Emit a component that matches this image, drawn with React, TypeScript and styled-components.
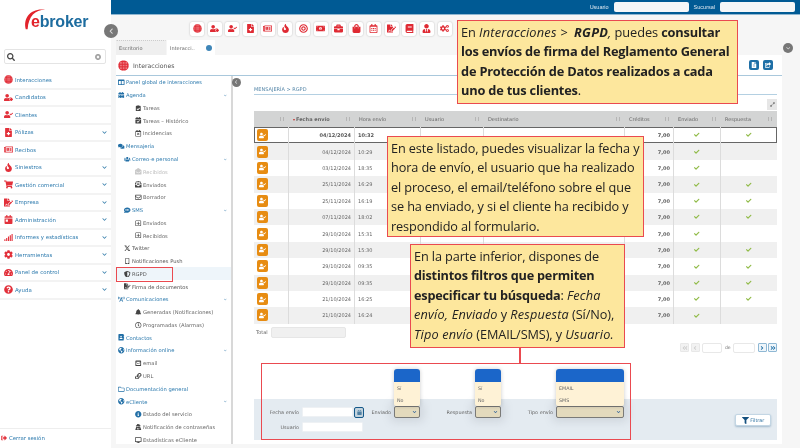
import React from "react";
import styled, { createGlobalStyle } from "styled-components";
import {
  FaUserCheck, FaUserTag, FaFileMedical, FaRegNewspaper, FaFire, FaShoppingCart, FaFileSignature, FaCalendarDay,
  FaSignal, FaCog, FaTachometerAlt, FaQuestionCircle, FaSignOutAlt, FaSearch, FaTimesCircle, FaChevronDown, FaChevronLeft,
  FaColumns, FaCalendarAlt, FaClipboardCheck, FaCalendarCheck, FaRegCalendarTimes, FaComments, FaUsers, FaEnvelopeOpen,
  FaEnvelopeOpenText, FaRegEnvelope, FaSms, FaRegPlusSquare, FaMobileAlt, FaShieldAlt, FaBroadcastTower, FaBell, FaRegClock,
  FaAddressBook, FaGlobeAmericas, FaEnvelopeSquare, FaLink, FaRegFolder, FaInfoCircle, FaUserSecret, FaDesktop, FaCheck,
  FaExpandAlt, FaFilter, FaMoneyBillAlt, FaBriefcase, FaShoppingBag, FaBook, FaUserTie, FaCogs, FaBullseye, FaRegCalendarAlt,
  FaAngleLeft, FaAngleRight, FaAngleDoubleLeft, FaAngleDoubleRight, FaCalendar, FaFileAlt, FaShareSquare,
} from "react-icons/fa";
import { FaXTwitter } from "react-icons/fa6";

const Global = createGlobalStyle`
  html, body { margin: 0; padding: 0; width: 800px; height: 448px; overflow: hidden; background: #f6f6f6; }
  * { box-sizing: border-box; }
`;

const Shell = styled.div`
  position: relative; width: 800px; height: 448px; overflow: hidden; display: flex; background: #f6f6f6;
  font-family: "DejaVu Sans", sans-serif; filter: blur(0.35px);
`;

/* sidebar */
const Sidebar = styled.aside`width: 111px; height: 448px; background: #fff; display: flex; flex-direction: column;`;
const LogoBox = styled.div`position: relative; height: 49px; padding: 13px 0 0 31px;`;
const LogoText = styled.div`font: bold 16px/18px "Liberation Sans", sans-serif; color: #1d6c9f; letter-spacing: -0.2px; span { color: #e2232b; }`;
const Swoosh = styled.svg`position: absolute; left: 23px; top: 7px;`;
const SearchBox = styled.div`
  margin: 0 5px 0 4px; height: 15px; border: 1px solid #e4e4e4; border-radius: 2px; display: flex; align-items: center;
  justify-content: space-between; padding: 0 4px 0 2px; color: #444; background: #fff;
`;
const Menu = styled.nav`margin-top: 8px; display: flex; flex-direction: column;`;
const MenuRow = styled.div`
  height: 17.5px; display: flex; align-items: center; padding: 0 3.5px 0 4px; border-bottom: 2px solid #f3f3f3;
  color: #2b79ad; font-size: 5.4px; letter-spacing: 0.05px; svg.ic { color: #e2303a; width: 9px; height: 9px; flex: none; }
`;
const MenuLabel = styled.span`margin-left: 2px; flex: 1; white-space: nowrap;`;
const Chevron = styled(FaChevronDown)`color: #3a80ad; width: 7px; height: 5px; flex: none;`;
const Logout = styled.div`
  margin-top: auto; height: 20px; border-top: 1px solid #eee; display: flex; align-items: center; padding: 0 0 2px 1px;
  color: #2b79ad; font-size: 5.4px; gap: 2px; svg { color: #e2303a; width: 6px; height: 6px; }
`;

/* main column */
const Main = styled.main`flex: 1; min-width: 0; display: flex; flex-direction: column;`;
const TopBar = styled.header`
  height: 15px; background: #005a94; border-bottom: 1px solid #8fb6d0; display: flex; align-items: center; justify-content: flex-end;
  padding: 0 5px 1px 0; color: #dfe9f1; font: 5.5px "Liberation Sans", sans-serif;
`;
const TopInput = styled.div`width: 75px; height: 10px; background: #f5f7f8; border-radius: 2px; margin: 0 5px 0 5px; &:last-child { margin-right: 0; }`;
const Toolbar = styled.div`height: 24px; display: flex; align-items: center; gap: 3.7px; padding: 3px 0 0 79px;`;
const ToolBtn = styled.div`
  width: 14px; height: 14px; flex: none; background: #fff; border-radius: 2px; box-shadow: 0 0 2px rgba(0,0,0,.25);
  display: flex; align-items: center; justify-content: center; color: #df2a33; svg { width: 9px; height: 9px; }
`;
const Tabs = styled.div`height: 16px; display: flex; padding-left: 5px; gap: 1px; align-items: flex-end;`;
const Tab = styled.div<{ $active?: boolean }>`
  height: 15px; width: ${p => p.$active ? 48 : 50}px; padding: 0 3px; display: flex; align-items: center; justify-content: space-between;
  font-size: 5px; color: #666; background: ${p => p.$active ? "#fff" : "#efefef"};
  border-top: 1px ${p => p.$active ? "solid #fff" : "dotted #ccc"}; border-radius: 1px 1px 0 0;
`;
const TabDot = styled.span`width: 6px; height: 6px; border-radius: 50%; background: #3f86b8; flex: none;`;
const Panel = styled.section`flex: 1; margin: 0 18px 4px 5px; background: #fff; display: flex; flex-direction: column; min-height: 0;`;
const PanelHead = styled.div`
  height: 21px; flex: none; border-bottom: 1px solid #a9c8dc; display: flex; align-items: center; padding: 0 9px 0 2px;
  color: #555; font-size: 6.2px; gap: 4px;
`;
const HeadBtns = styled.div`margin-left: auto; display: flex; gap: 4px;`;
const HeadBtn = styled.div`
  width: 10px; height: 10px; border-radius: 2px; background: #1f6fa6; color: #fff; display: flex; align-items: center; justify-content: center;
  svg { width: 6px; height: 6px; }
`;
const PanelBody = styled.div`flex: 1; display: flex; min-height: 0;`;
const Tree = styled.div`width: 117px; flex: none; border-right: 2px solid #d8d8d8; overflow: hidden;`;
const TreeRow = styled.div<{ $level: number; $dim?: boolean; $on?: boolean }>`
  height: 12.78px; display: flex; align-items: center; position: relative; white-space: nowrap;
  padding-left: ${p => [2, 8, 19][p.$level]}px; gap: 1.5px;
  font-size: 5.2px;
  background: ${p => p.$on ? "#eef5fa" : "transparent"};
  color: ${p => p.$dim ? "#bbb" : p.$level === 0 ? "#2b79ad" : p.$level === 1 ? "#555" : "#666"};
  svg.ti { width: 6.5px; height: 6.5px; flex: none; color: ${p => p.$dim ? "#c9c9c9" : p.$level === 0 ? "#226fa6" : "#444"}; }
  svg.blue { color: #226fa6; }
`;
const TreeLabel = styled.span<{ $blue?: boolean }>`color: ${p => p.$blue ? "#2b79ad" : "inherit"};`;
const TreeChevron = styled(FaChevronDown)`position: absolute; right: 4px; top: 5px; width: 4.5px; height: 3px; color: #5a93ba;`;

const Content = styled.div`flex: 1; min-width: 0; display: flex; flex-direction: column; padding: 9px 5px 4px 21px;`;
const Crumb = styled.div`height: 10px; border-bottom: 1px solid #b4d0e2; color: #5586a8; font-size: 5px; line-height: 8px; flex: none;`;
const ExpandRow = styled.div`height: 6px; margin-top: 5px; flex: none; position: relative;`;
const ExpandTab = styled.div`
  position: absolute; right: 0; top: -1px; width: 10px; height: 11px; background: #e6e6e6; color: #666; display: flex; align-items: center; justify-content: center;
  svg { width: 5px; height: 5px; }
`;
const COLS = "35px 66px 66px 63px 141px 49px 47px 56px";
const Table = styled.div`margin-top: 5px; flex: none; border-radius: 0 0 2px 2px;`;
const HeadRow = styled.div`
  display: grid; grid-template-columns: ${COLS}; height: 16px; background: #d3d4d4; color: #666; font-size: 5px; align-items: center;
`;
const HeadCell = styled.div`
  display: flex; align-items: center; height: 100%; padding-left: 4px; position: relative; white-space: nowrap;
  &::after { content: ""; position: absolute; right: 5px; top: 6px; width: 2px; height: 4px; border-left: 1px solid #b5b5b5; border-right: 1px solid #b5b5b5; }
`;
const SortMark = styled.span`color: #c6332f; margin-right: 1px; font-size: 4px;`;
const Row = styled.div<{ $alt: boolean; $sel?: boolean }>`
  display: grid; grid-template-columns: ${COLS}; height: 16.4px; position: relative;
  background: ${p => p.$alt ? "#f0f0f0" : "#fff"}; color: #666; font-size: 5px;
  ${p => p.$sel ? "box-shadow: inset 0 0 0 1px #666; font-weight: 700; color: #555;" : ""}
`;
const Cell = styled.div<{ $align?: string; $line?: boolean }>`
  display: flex; align-items: center; height: 100%;
  justify-content: ${p => p.$align || "flex-start"};
  border-right: ${p => p.$line ? "1.5px solid #dcdcdc" : "0"};
  padding: ${p => p.$align === "flex-end" ? "0 3px 0 0" : p.$align === "flex-start" ? "0 0 0 3px" : p.$align ? "0" : "0 0 0 3px"};
`;
const OrangeBtn = styled.div`
  width: 11px; height: 12px; border-radius: 2px; background: #e78c12; color: #fff; display: flex; align-items: center; justify-content: center;
  svg { width: 7px; height: 7px; }
`;
const Tick = styled(FaCheck)`width: 5.5px; height: 5.5px; color: #8fba45;`;
const TotalRow = styled.div`display: flex; align-items: center; gap: 3px; margin-top: 3px; height: 11px; color: #666; font-size: 5px; padding-left: 2px; flex: none;`;
const TotalBox = styled.div`width: 75px; height: 11px; background: #f0f0f0; border: 1px solid #e6e6e6; border-radius: 2px;`;
const Pager = styled.div`display: flex; align-items: center; justify-content: flex-end; margin-top: 5px; height: 10px; gap: 1.5px; color: #777; font-size: 4.5px; flex: none;`;
const PageBtn = styled.div<{ $on?: boolean }>`
  width: 9px; height: 9px; display: flex; align-items: center; justify-content: center; border-radius: 1px;
  border: 1px solid ${p => p.$on ? "#8fb8d4" : "#e8e8e8"}; background: ${p => p.$on ? "#eef5fa" : "#f2f2f2"};
  color: ${p => p.$on ? "#1f6fa6" : "#ccc"}; svg { width: 6px; height: 6px; }
`;
const PageInput = styled.div<{ $w: number }>`width: ${p => p.$w}px; height: 10px; border: 1px solid #e8e8e8; border-radius: 2px; background: #fff; margin: 0 1px;`;

const Filters = styled.div`margin-top: auto; height: 41px; flex: none; background: #e4ebf1; display: flex; padding-top: 8px;`;
const FilterRows = styled.div`flex: 1; display: flex; flex-direction: column; gap: 5px;`;
const FilterRow = styled.div`display: flex; align-items: center; height: 10px;`;
const Field = styled.div<{ $ml: number }>`display: flex; align-items: center; margin-left: ${p => p.$ml}px; position: relative;`;
const FieldLabel = styled.label<{ $w: number }>`width: ${p => p.$w}px; text-align: right; margin-right: 3px; font-size: 4.9px; color: #666; white-space: nowrap; display: flex; justify-content: flex-end;`;
const TextInput = styled.div<{ $w: number }>`width: ${p => p.$w}px; height: 10px; background: #fff; border-radius: 1px; border: 1px solid #eef1f4;`;
const DateBtn = styled.div`
  width: 10px; height: 11px; margin-left: 1px; border-radius: 2px; background: #c3d3dd; border: 1.5px solid #15598a; color: #4f80a3; display: flex; align-items: center; justify-content: center;
  svg { width: 5px; height: 5px; }
`;
const SelectBox = styled.div<{ $w: number }>`
  width: ${p => p.$w}px; height: 12px; background: #e3dabd; border: 1px solid #7a7a78; border-radius: 2px; display: flex; align-items: center; justify-content: flex-end;
  padding-right: 2px; box-shadow: 0 0 9px 4px rgba(120,130,140,.18); svg { width: 5px; height: 4px; color: #2a5f9a; }
`;
const DropList = styled.div<{ $w: number }>`
  position: absolute; right: 0; bottom: 12px; width: ${p => p.$w}px; background: #fef2d6; border-radius: 3px 3px 2px 2px; overflow: hidden; box-shadow: 0 0 4px rgba(0,0,0,.2);
`;
const DropHead = styled.div`height: 13px; background: #1b66c9;`;
const DropItem = styled.div`height: 12px; display: flex; align-items: center; padding-left: 3px; font-size: 4.8px; color: #666;`;
const FilterBtn = styled.div`
  width: 36px; height: 12px; margin: 7px 6px 0 0; background: #fff; border: 1px solid #c3d6e4; border-radius: 2px; box-shadow: 0 1px 2px rgba(60,110,150,.4);
  display: flex; align-items: center; justify-content: center; gap: 1.5px; color: #2b6f9f; font-size: 4.8px; svg { width: 7px; height: 7px; color: #14507f; }
`;

/* overlays */
const CircleBtn = styled.div<{ $x: number; $y: number; $s: number }>`
  position: absolute; left: ${p => p.$x}px; top: ${p => p.$y}px; width: ${p => p.$s}px; height: ${p => p.$s}px; border-radius: 50%;
  background: #777; color: #ddd; display: flex; align-items: center; justify-content: center; z-index: 2;
  svg { width: 45%; height: 45%; }
`;
const Callout = styled.div<{ $x: number; $y: number; $w: number; $h: number; $fs: number }>`
  position: absolute; left: ${p => p.$x}px; top: ${p => p.$y}px; width: ${p => p.$w}px; height: ${p => p.$h}px; z-index: 3;
  background: #fde79d; border: 1.5px solid #ea4a50; color: #222;
  font-family: "Open Sans", sans-serif; font-size: ${p => p.$fs}px; padding: 1.5px 3px 0 3px; white-space: nowrap;
  letter-spacing: -0.1px; line-height: 19.5px;
  b { letter-spacing: -0.2px; }
  i { letter-spacing: 0.2px; }
`;
const Mark = styled.div<{ $x: number; $y: number; $w: number; $h: number }>`
  position: absolute; left: ${p => p.$x}px; top: ${p => p.$y}px; width: ${p => p.$w}px; height: ${p => p.$h}px; z-index: 3;
  border: 1.5px solid #ea4a50; pointer-events: none;
`;
const Connector = styled.div`position: absolute; left: 519px; top: 348px; width: 1.5px; height: 16px; background: #ea4a50; z-index: 3;`;

function DotGlobe({ s = 9 }: { s?: number }) {
  const dots: React.ReactNode[] = [];
  for (let y = 1; y < 16; y += 2.3) for (let x = 1; x < 16; x += 2.3) {
    dots.push(<circle key={x + "-" + y} cx={x} cy={y} r="0.55" fill="#fff" />);
  }
  return (
    <svg className="ic" width={s} height={s} viewBox="0 0 16 16">
      <circle cx="8" cy="8" r="7.8" fill="#e2303a" />
      {dots}
    </svg>
  );
}

const I = (C: any) => <C className="ic" />;

const menu: [React.ReactNode, string, boolean][] = [
  [<DotGlobe />, "Interacciones", false],
  [I(FaUserTag), "Candidatos", false],
  [I(FaUserCheck), "Clientes", false],
  [I(FaFileMedical), "Pólizas", true],
  [I(FaRegNewspaper), "Recibos", false],
  [I(FaFire), "Siniestros", true],
  [I(FaShoppingCart), "Gestión comercial", true],
  [I(FaFileSignature), "Empresa", true],
  [I(FaCalendarDay), "Administración", true],
  [I(FaSignal), "Informes y estadísticas", true],
  [I(FaCog), "Herramientas", true],
  [I(FaTachometerAlt), "Panel de control", true],
  [I(FaQuestionCircle), "Ayuda", true],
];

const tools = [null, FaUserTag, FaUserCheck, FaFileMedical, FaRegNewspaper, FaFire, FaBullseye, FaMoneyBillAlt, FaBriefcase, FaShoppingBag, FaRegCalendarAlt, FaFileSignature, FaBook, FaUserTie, FaCogs];

type T = { l: number; t: string; C: any; chev?: boolean; dim?: boolean; blue?: boolean; on?: boolean };
const tree: T[] = [
  { l: 0, t: "Panel global de interacciones", C: FaColumns },
  { l: 0, t: "Agenda", C: FaCalendarAlt, chev: true },
  { l: 2, t: "Tareas", C: FaClipboardCheck },
  { l: 2, t: "Tareas – Histórico", C: FaCalendarCheck },
  { l: 2, t: "Incidencias", C: FaRegCalendarTimes },
  { l: 0, t: "Mensajería", C: FaComments },
  { l: 1, t: "Correo-e personal", C: FaUsers, chev: true, blue: true },
  { l: 2, t: "Recibidos", C: FaEnvelopeOpen, dim: true },
  { l: 2, t: "Enviados", C: FaEnvelopeOpenText },
  { l: 2, t: "Borrador", C: FaRegEnvelope },
  { l: 1, t: "SMS", C: FaSms, chev: true, blue: true },
  { l: 2, t: "Enviados", C: FaRegPlusSquare },
  { l: 2, t: "Recibidos", C: FaRegPlusSquare },
  { l: 1, t: "Twitter", C: FaXTwitter },
  { l: 1, t: "Notificaciones Push", C: FaMobileAlt },
  { l: 1, t: "RGPD", C: FaShieldAlt, on: true },
  { l: 1, t: "Firma de documentos", C: FaFileSignature },
  { l: 0, t: "Comunicaciones", C: FaBroadcastTower, chev: true },
  { l: 2, t: "Generadas (Notificaciones)", C: FaBell },
  { l: 2, t: "Programadas (Alarmas)", C: FaRegClock },
  { l: 0, t: "Contactos", C: FaAddressBook },
  { l: 0, t: "Información online", C: FaGlobeAmericas, chev: true },
  { l: 2, t: "email", C: FaEnvelopeSquare },
  { l: 2, t: "URL", C: FaLink },
  { l: 0, t: "Documentación general", C: FaRegFolder },
  { l: 0, t: "eCliente", C: FaGlobeAmericas, chev: true },
  { l: 2, t: "Estado del servicio", C: FaInfoCircle, blue: true },
  { l: 2, t: "Notificación de contraseñas", C: FaUserSecret },
  { l: 2, t: "Estadísticas eCliente", C: FaDesktop },
];

const rows: [string, string, boolean][] = [
  ["04/12/2024", "10:32", true], ["04/12/2024", "10:29", false], ["03/12/2024", "18:35", false],
  ["25/11/2024", "16:29", true], ["25/11/2024", "16:19", true], ["07/11/2024", "18:02", true],
  ["29/10/2024", "15:31", false], ["29/10/2024", "15:30", true], ["29/10/2024", "09:35", true],
  ["29/10/2024", "09:35", true], ["21/10/2024", "16:25", true], ["21/10/2024", "16:24", false],
];

function Dropdown({ w, items, label, ml, lw }: { w: number; items: string[]; label: string; ml: number; lw: number }) {
  return (
    <Field $ml={ml}>
      <FieldLabel $w={lw}>{label}</FieldLabel>
      <SelectBox $w={w}><FaChevronDown /></SelectBox>
      <DropList $w={w}>
        <DropHead />
        {items.map(i => <DropItem key={i}>{i}</DropItem>)}
      </DropList>
    </Field>
  );
}

export default function App() {
  return (
    <>
      <Global />
      <Shell>
        <Sidebar>
          <LogoBox>
            <Swoosh width="24" height="24" viewBox="0 0 26 26">
              <path d="M3 24 C0 12 8 1 24 3 C13 3 6 10 5 24 Z" fill="#e2232b" />
            </Swoosh>
            <LogoText><span>e</span>broker</LogoText>
          </LogoBox>
          <SearchBox>
            <FaSearch size={8} />
            <FaTimesCircle size={6} color="#999" />
          </SearchBox>
          <Menu>
            {menu.map(([ic, t, ch]) => (
              <MenuRow key={t}>{ic}<MenuLabel>{t}</MenuLabel>{ch && <Chevron />}</MenuRow>
            ))}
          </Menu>
          <Logout><FaSignOutAlt />Cerrar sesión</Logout>
        </Sidebar>
        <Main>
          <TopBar>Usuario<TopInput />Sucursal<TopInput /></TopBar>
          <Toolbar>
            {tools.map((C, i) => <ToolBtn key={i}>{C ? <C /> : <DotGlobe />}</ToolBtn>)}
          </Toolbar>
          <Tabs>
            <Tab>Escritorio</Tab>
            <Tab $active>Interacci..<TabDot /></Tab>
          </Tabs>
          <Panel>
            <PanelHead>
              <DotGlobe s={11} />Interacciones
              <HeadBtns>
                <HeadBtn><FaFileAlt /></HeadBtn>
                <HeadBtn><FaShareSquare /></HeadBtn>
              </HeadBtns>
            </PanelHead>
            <PanelBody>
              <Tree>
                {tree.map((r, i) => (
                  <TreeRow key={i} $level={r.l} $dim={r.dim} $on={r.on}>
                    <r.C className={r.blue ? "ti blue" : "ti"} />
                    <TreeLabel $blue={r.blue && r.l === 1}>{r.t}</TreeLabel>
                    {r.chev && <TreeChevron />}
                  </TreeRow>
                ))}
              </Tree>
              <Content>
                <Crumb>MENSAJERÍA &gt; RGPD</Crumb>
                <ExpandRow><ExpandTab><FaExpandAlt /></ExpandTab></ExpandRow>
                <Table>
                  <HeadRow>
                    <HeadCell />
                    <HeadCell><SortMark>▾</SortMark><b>Fecha envío</b></HeadCell>
                    <HeadCell>Hora envío</HeadCell>
                    <HeadCell>Usuario</HeadCell>
                    <HeadCell>Destinatario</HeadCell>
                    <HeadCell>Créditos</HeadCell>
                    <HeadCell>Enviado</HeadCell>
                    <HeadCell>Respuesta</HeadCell>
                  </HeadRow>
                  {rows.map(([d, h, r], i) => (
                    <Row key={i} $alt={i % 2 === 1} $sel={i === 0}>
                      <Cell $align="flex-start" $line><OrangeBtn><FaUserCheck /></OrangeBtn></Cell>
                      <Cell $align="flex-end" $line>{d}</Cell>
                      <Cell $line>{h}</Cell>
                      <Cell $line />
                      <Cell $line />
                      <Cell $align="flex-end" $line><b>7,00</b></Cell>
                      <Cell $align="center" $line><Tick /></Cell>
                      <Cell $align="center">{r && <Tick />}</Cell>
                    </Row>
                  ))}
                </Table>
                <TotalRow>Total<TotalBox /></TotalRow>
                <Pager>
                  <PageBtn><FaAngleDoubleLeft /></PageBtn>
                  <PageBtn><FaAngleLeft /></PageBtn>
                  <PageInput $w={20} />de<PageInput $w={22} />
                  <PageBtn $on><FaAngleRight /></PageBtn>
                  <PageBtn $on><FaAngleDoubleRight /></PageBtn>
                </Pager>
                <Filters>
                  <FilterRows>
                    <FilterRow>
                      <Field $ml={0}>
                        <FieldLabel $w={45}>Fecha envío</FieldLabel>
                        <TextInput $w={51} />
                        <DateBtn><FaCalendar /></DateBtn>
                      </Field>
                      <Dropdown ml={6} lw={21} w={26} label="Enviado" items={["Sí", "No"]} />
                      <Dropdown ml={26} lw={26} w={26} label="Respuesta" items={["Sí", "No"]} />
                      <Dropdown ml={25} lw={27} w={68} label="Tipo envío" items={["EMAIL", "SMS"]} />
                    </FilterRow>
                    <FilterRow>
                      <Field $ml={0}>
                        <FieldLabel $w={45}>Usuario</FieldLabel>
                        <TextInput $w={61} />
                      </Field>
                    </FilterRow>
                  </FilterRows>
                  <FilterBtn><FaFilter />Filtrar</FilterBtn>
                </Filters>
              </Content>
            </PanelBody>
          </Panel>
        </Main>

        <CircleBtn $x={104} $y={24} $s={14}><FaChevronLeft /></CircleBtn>
        <CircleBtn $x={232} $y={78} $s={9}><FaChevronLeft /></CircleBtn>
        <CircleBtn $x={783} $y={43} $s={10}><FaChevronDown /></CircleBtn>

        <Callout $x={457} $y={20} $w={281} $h={84} $fs={12.8}>
          En <i>Interacciones &gt;</i> &nbsp;<b><i>RGPD</i></b><i>,</i> puedes <b>consultar</b><br />
          <b>los envíos de firma del Reglamento General</b><br />
          <b>de Protección de Datos realizados a cada</b><br />
          <b>uno de tus clientes</b>.
        </Callout>
        <Callout $x={387} $y={136} $w={257} $h={101} $fs={12.7}>
          En este listado, puedes visualizar la fecha y<br />
          hora de envío, el usuario que ha realizado<br />
          el proceso, el email/teléfono sobre el que<br />
          se ha enviado, y si el cliente ha recibido y<br />
          respondido al formulario.
        </Callout>
        <Callout $x={410} $y={244} $w={215} $h={104} $fs={12.7}>
          En la parte inferior, dispones de<br />
          <b>distintos filtros que permiten</b><br />
          <b>especificar tu búsqueda</b>: <i>Fecha</i><br />
          <i>envío, Enviado</i> y <i>Respuesta</i> (Sí/No),<br />
          <i>Tipo envío</i> (EMAIL/SMS), y <i>Usuario.</i>
        </Callout>
        <Connector />
        <Mark $x={261} $y={363} $w={370} $h={77} />
        <Mark $x={116} $y={267} $w={57} $h={15} />
      </Shell>
    </>
  );
}
